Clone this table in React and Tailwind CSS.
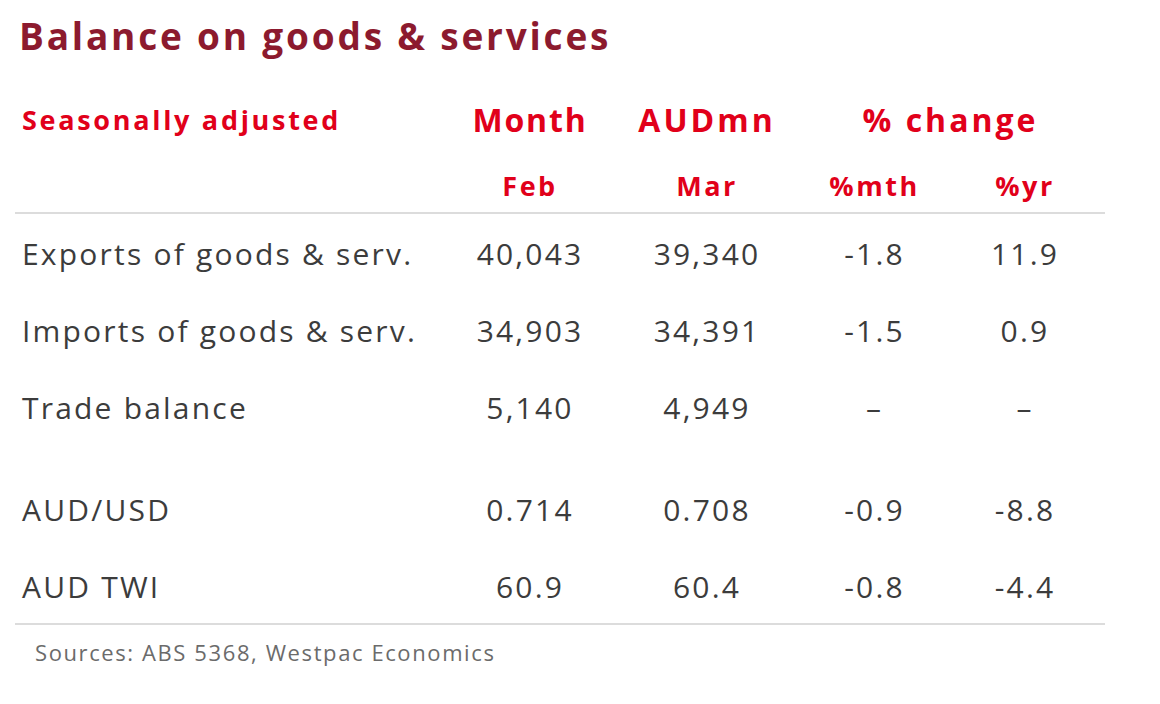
import React from "react";

const rows = [
  { label: "Exports of goods & serv.", feb: "40,043", mar: "39,340", mth: "-1.8", yr: "11.9" },
  { label: "Imports of goods & serv.", feb: "34,903", mar: "34,391", mth: "-1.5", yr: "0.9" },
  { label: "Trade balance", feb: "5,140", mar: "4,949", mth: "–", yr: "–" },
];

const fx = [
  { label: "AUD/USD", feb: "0.714", mar: "0.708", mth: "-0.9", yr: "-8.8" },
  { label: "AUD TWI", feb: "60.9", mar: "60.4", mth: "-0.8", yr: "-4.4" },
];

const cols = "grid grid-cols-[435px_160px_194px_141px_160px] items-center";

const DataRow = ({ row }) => (
  <div className={`${cols} h-[77px] text-[30px] tracking-[2.2px] text-[#3c3c3c]`}>
    <div className="pl-[7px]">{row.label}</div>
    <div className="text-center">{row.feb}</div>
    <div className="text-center">{row.mar}</div>
    <div className="text-center">{row.mth}</div>
    <div className="text-center">{row.yr}</div>
  </div>
);

export default function App() {
  return (
    <div
      className="w-[1160px] h-[704px] bg-white overflow-hidden"
      style={{ fontFamily: "'Open Sans', 'Liberation Sans', sans-serif" }}
    >
      <div className="pl-[19px] pt-[11px] h-[80px] text-[37px] tracking-[2.8px] font-bold text-[#8c1a2e] leading-[50px]">
        Balance on goods &amp; services
      </div>

      <div className="ml-[15px] w-[1090px]">
        <div className={`${cols} h-[80px] text-[#e1001a] font-bold`}>
          <div className="pl-[7px] text-[27px] tracking-[2.7px]">Seasonally adjusted</div>
          <div className="text-center text-[32px] tracking-[1.8px]">Month</div>
          <div className="text-center text-[32px] tracking-[3px]">AUDmn</div>
          <div className="col-span-2 text-center text-[32px] tracking-[3px] pr-[8px]">% change</div>
        </div>

        <div className={`${cols} h-[54px] text-[#e1001a] font-bold text-[27px] tracking-[2.5px] border-b-2 border-[#dcdcdc]`}>
          <div></div>
          <div className="text-center">Feb</div>
          <div className="text-center">Mar</div>
          <div className="text-center">%mth</div>
          <div className="text-center">%yr</div>
        </div>

        <div className="pt-[1px]">
          {rows.map((r) => (
            <DataRow key={r.label} row={r} />
          ))}
        </div>

        <div className="pt-[25px] h-[179px] border-b-2 border-[#dcdcdc]">
          {fx.map((r) => (
            <DataRow key={r.label} row={r} />
          ))}
        </div>

        <div className="pl-[20px] pt-[11px] text-[22px] tracking-[1.6px] text-[#6b6b6b]">
          Sources: ABS 5368, Westpac Economics
        </div>
      </div>
    </div>
  );
}
